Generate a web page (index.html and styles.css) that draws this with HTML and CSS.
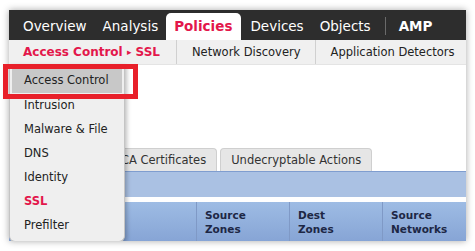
FILE: index.html
```html
<!DOCTYPE html>
<html lang="en">
<head>
  <meta charset="UTF-8" />
  <title>Policies - SSL</title>
  <link rel="stylesheet" href="styles.css">
</head>
<body>

  <div class="frame">
    <!-- Main navigation -->
    <div class="topnav">
      <span class="nav-item">Overview</span>
      <span class="nav-item">Analysis</span>
      <span class="nav-item active">Policies</span>
      <span class="nav-item">Devices</span>
      <span class="nav-item">Objects</span>
      <span class="nav-sep"></span>
      <span class="nav-item amp">AMP</span>
    </div>

    <!-- Sub navigation -->
    <div class="subnav">
      <span class="sub-item current">Access Control <span class="arrow">&#9656;</span> SSL</span>
      <span class="sub-item">Network Discovery</span>
      <span class="sub-item last">Application Detectors</span>
    </div>

    <div class="content">
      <div class="tabs">
        <span class="tab rules"></span>
        <span class="tab">Trusted CA Certificates</span>
        <span class="tab">Undecryptable Actions</span>
      </div>
      <div class="toolbar"></div>
      <div class="rule-head">
        <div class="col first"></div>
        <div class="col">Source<br>Zones</div>
        <div class="col">Dest<br>Zones</div>
        <div class="col">Source<br>Networks</div>
      </div>
    </div>

    <!-- Policies dropdown -->
    <ul class="dropdown">
      <li class="hover">Access Control</li>
      <li>Intrusion</li>
      <li>Malware &amp; File</li>
      <li>DNS</li>
      <li>Identity</li>
      <li class="selected">SSL</li>
      <li>Prefilter</li>
    </ul>
  </div>

  <!-- annotation box -->
  <div class="callout"></div>

</body>
</html>
```

FILE: styles.css
```css
body {
  margin: 0;
  background: #fff;
  font-family: "DejaVu Sans", Verdana, sans-serif;
  position: relative;
  width: 475px;
  height: 251px;
  overflow: hidden;
}

.frame {
  position: relative;
  margin: 10px 0 0 9px;
  width: 457px;
  height: 231px;
  background: #fff;
  box-shadow: 0 0 7px rgba(0,0,0,0.35);
  overflow: hidden;
}

.topnav {
  display: flex;
  align-items: flex-end;
  height: 30px;
  padding-left: 6px;
  background: #2d2d2d;
}

.nav-item {
  height: 27px;
  line-height: 27px;
  padding: 0 8px;
  color: #fff;
  font-size: 13.5px;
}

.nav-item.active {
  background: #fff;
  color: #e3174b;
  font-weight: bold;
  padding: 0 9px 0 8px;
  margin-right: 1px;
  border-radius: 5px 5px 0 0;
}

.nav-item.amp {
  font-weight: bold;
  padding-left: 13px;
}

.nav-sep {
  width: 1px;
  height: 18px;
  margin: 0 0 5px 6px;
  background: #6a6a6a;
}

.subnav {
  display: flex;
  height: 24px;
  overflow: hidden;
  background: #f0f0f0;
  border-bottom: 1px solid #e4e4e4;
}

.sub-item {
  flex: 0 0 auto;
  white-space: nowrap;
  line-height: 24px;
  padding: 0 14px 0 15px;
  font-size: 11.5px;
  color: #222;
  border-right: 1px solid #d0d0d0;
}

.sub-item.current {
  color: #e3174b;
  font-weight: bold;
  font-size: 12px;
  padding: 0 16px 0 14px;
}

.sub-item.last {
  border-right: none;
}

.arrow {
  font-size: 9px;
  vertical-align: 1px;
}

.content {
  padding-top: 83px;
}

.tabs {
  display: flex;
  gap: 3px;
}

.tab {
  height: 22px;
  line-height: 22px;
  padding: 0 10px;
  font-size: 11.5px;
  color: #333;
  background: #e6e6e6;
  border: 1px solid #cfcfcf;
  border-bottom: none;
  border-radius: 4px 4px 0 0;
}

.tab.rules {
  width: 30px;
}

.toolbar {
  height: 25px;
  background: #aac1e3;
  border-top: 1px solid #7f9dcf;
  border-bottom: 5px solid #fff;
}

.rule-head {
  display: flex;
  height: 40px;
  overflow: hidden;
  background: linear-gradient(#9ebce4, #86a4d5);
}

.col {
  flex: 0 0 auto;
  width: 84px;
  padding: 6px 0 0 8px;
  font-size: 10.5px;
  line-height: 14px;
  font-weight: bold;
  color: #1d2745;
  border-left: 1px solid #7f99c6;
}

.col.first {
  width: 187px;
  padding: 0;
  border-left: none;
}

.dropdown {
  position: absolute;
  left: 0;
  top: 54px;
  width: 110px;
  height: 171px;
  margin: 0;
  padding: 3px 2px 3px 2px;
  list-style: none;
  background: #efefef;
  border: 1px solid #c4c4c4;
  border-top: none;
  border-radius: 0 0 6px 6px;
  box-shadow: 2px 2px 4px rgba(0,0,0,0.25);
}

.dropdown li {
  height: 24px;
  line-height: 24px;
  padding-left: 12px;
  font-size: 11.5px;
  color: #222;
}

.dropdown li.hover {
  height: 26px;
  line-height: 26px;
  background: #c8c8c8;
}

.dropdown li.selected {
  color: #e3174b;
  font-weight: bold;
}

.callout {
  position: absolute;
  left: 3px;
  top: 64px;
  width: 125px;
  height: 25px;
  border: 5px solid #e8202a;
}
```
